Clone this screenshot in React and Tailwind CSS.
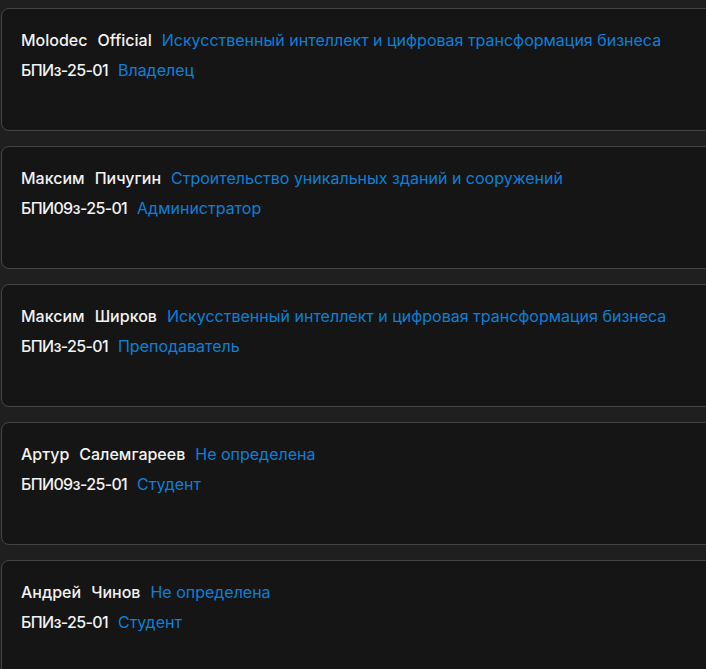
const users = [
    { first: "Molodec", last: "Official", program: "Искусственный интеллект и цифровая трансформация бизнеса", group: "БПИз-25-01", role: "Владелец" },
    { first: "Максим", last: "Пичугин", program: "Строительство уникальных зданий и сооружений", group: "БПИ09з-25-01", role: "Администратор" },
    { first: "Максим", last: "Ширков", program: "Искусственный интеллект и цифровая трансформация бизнеса", group: "БПИз-25-01", role: "Преподаватель" },
    { first: "Артур", last: "Салемгареев", program: "Не определена", group: "БПИ09з-25-01", role: "Студент" },
    { first: "Андрей", last: "Чинов", program: "Не определена", group: "БПИз-25-01", role: "Студент" },
];

const App = () => {
    return (
        <div className="h-[669px] overflow-hidden bg-[#1f1f1f] pt-2 pl-px font-['Inter','Liberation_Sans',sans-serif] text-base">
            <div className="flex flex-col gap-[15px]">
                {users.map((u, idx) => (
                    <div key={idx} className="w-[730px] h-[123px] shrink-0 rounded-lg border border-[#444444] bg-[#151515] pl-[19px] pt-[19px]">
                        <div className="flex items-center gap-2.5 leading-6">
                            <span className="flex gap-2.5 font-medium text-[#f2f2f2]">
                                <span>{u.first}</span>
                                <span>{u.last}</span>
                            </span>
                            <span className="text-[#0a80d9]">{u.program}</span>
                        </div>
                        <div className="mt-1.5 flex items-center gap-2.5 leading-6">
                            <span className="font-medium tracking-[-0.65px] text-[#f2f2f2]">{u.group}</span>
                            <span className="text-[#0a80d9]">{u.role}</span>
                        </div>
                    </div>
                ))}
            </div>
        </div>
    )
}

export default App;
